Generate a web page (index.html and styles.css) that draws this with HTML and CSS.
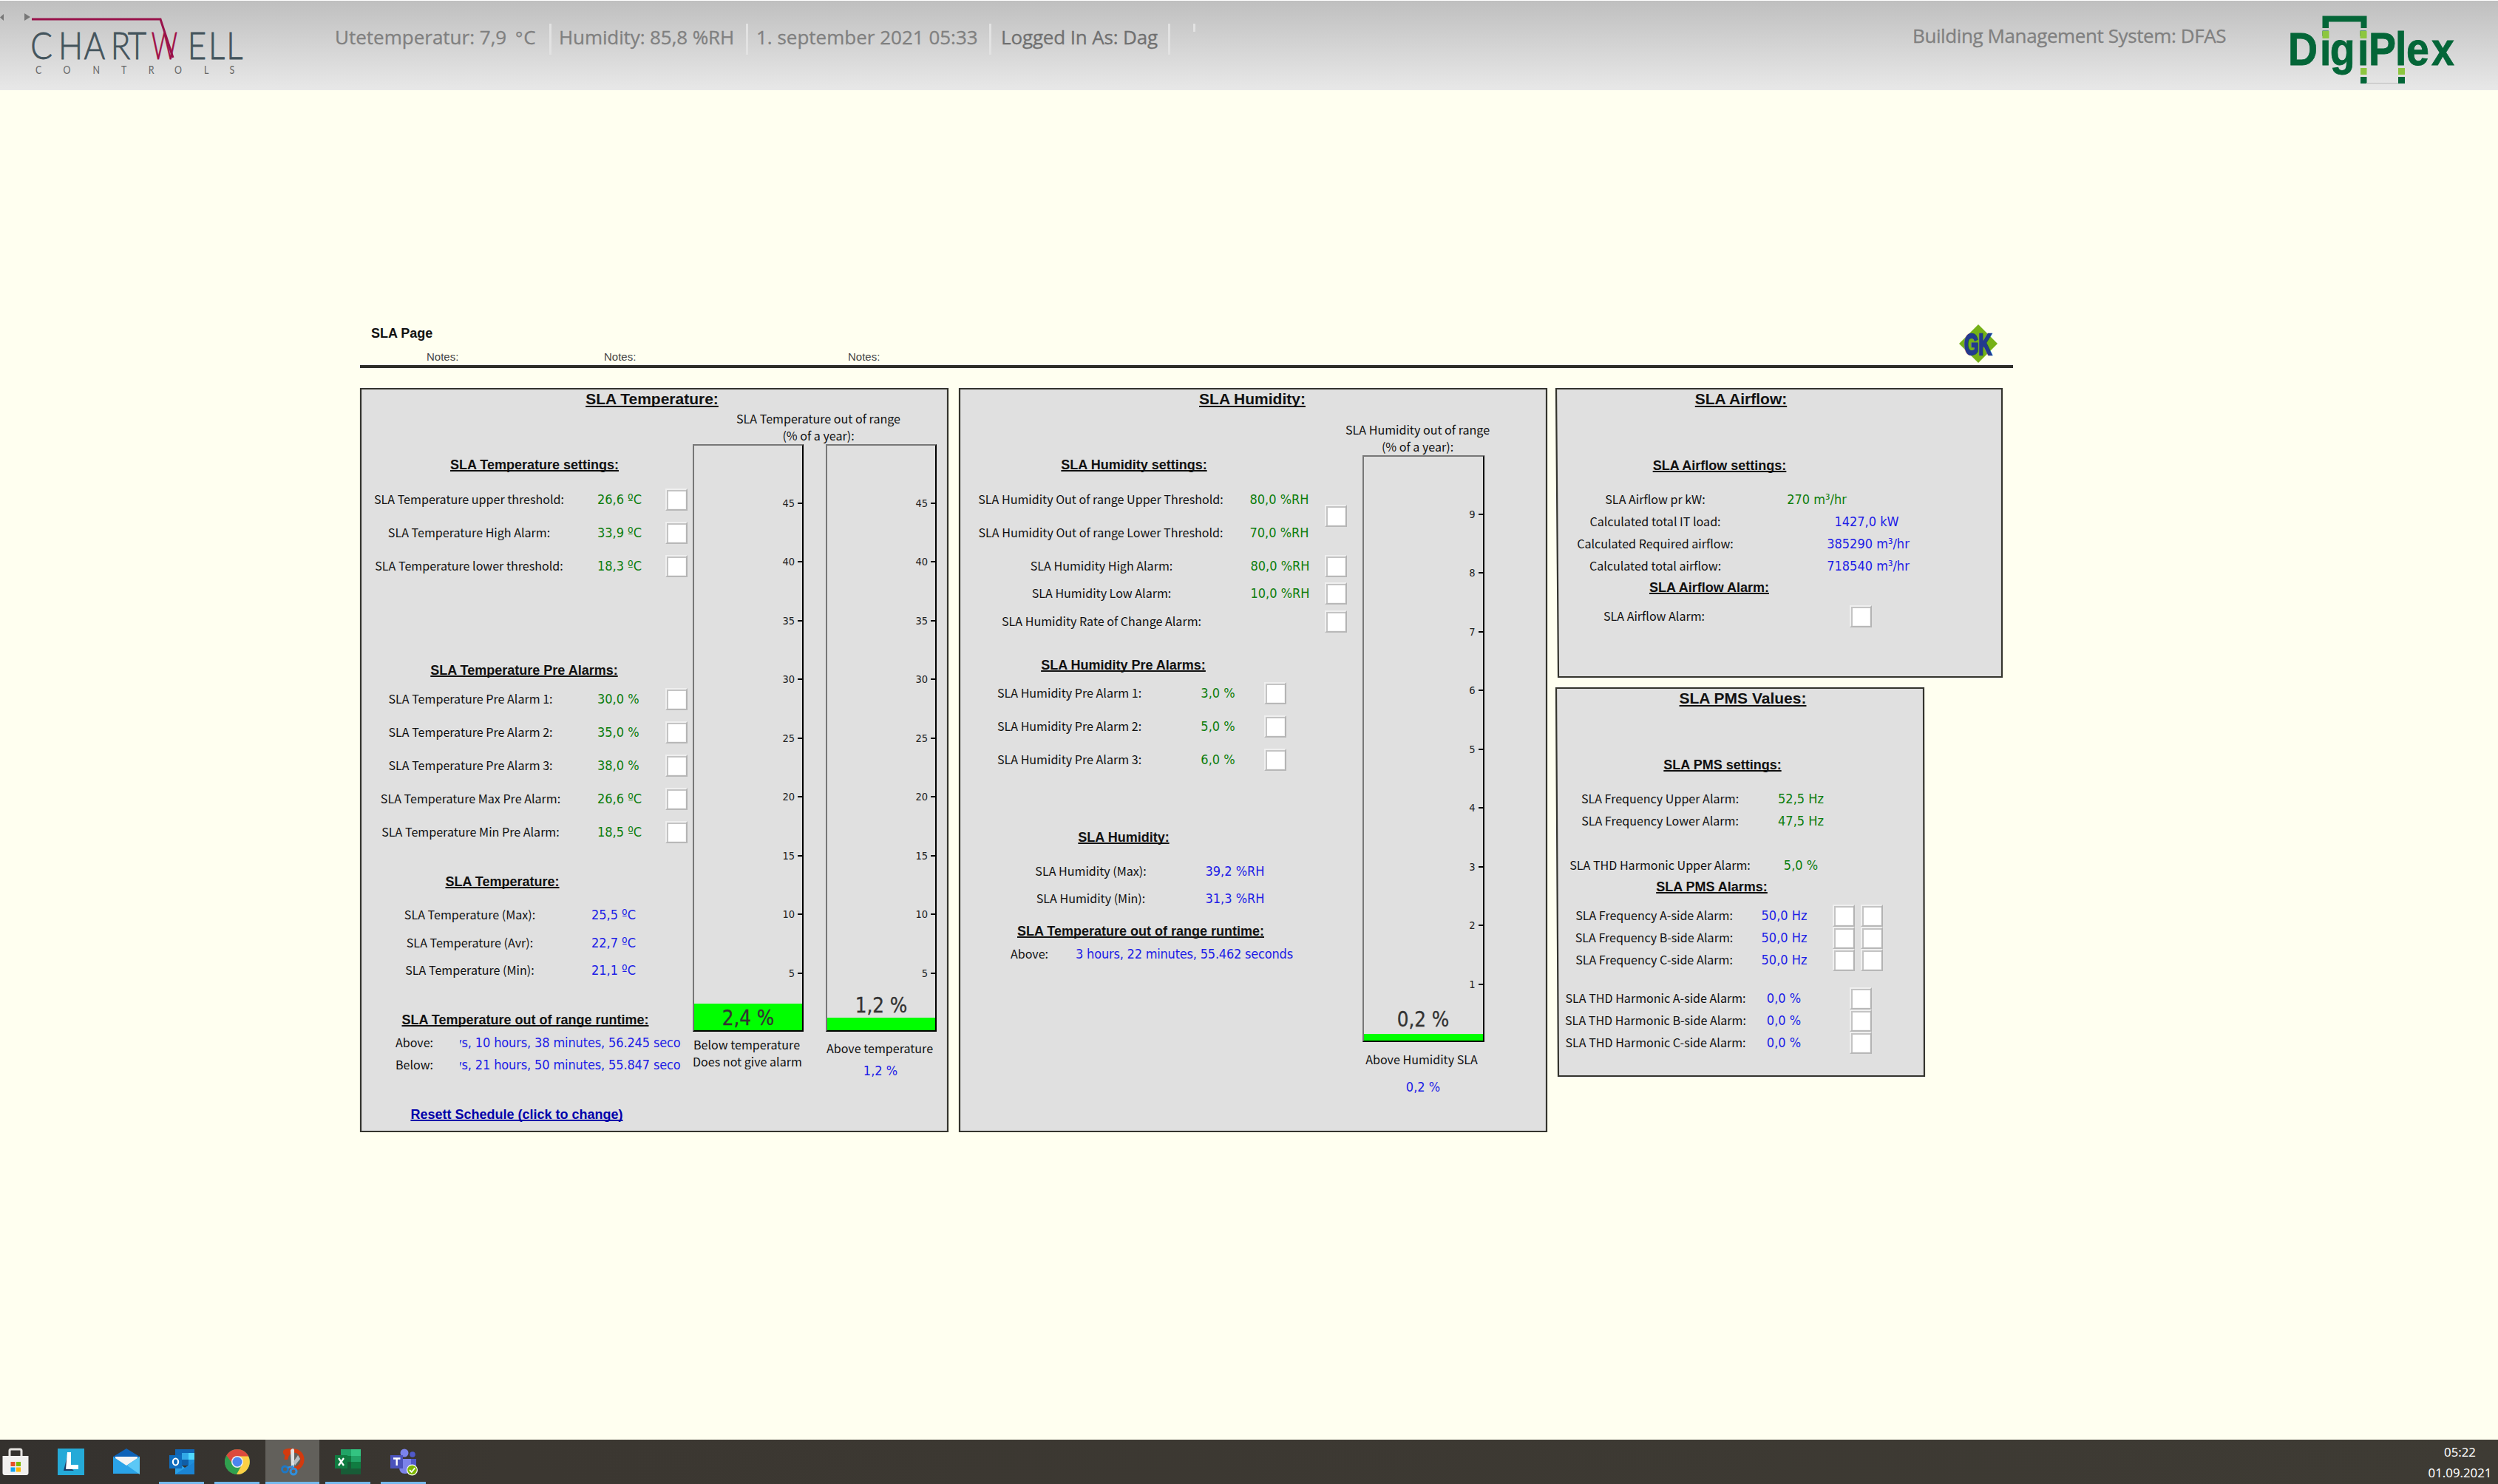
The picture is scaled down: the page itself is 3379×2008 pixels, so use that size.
FILE: index.html
```html
<!DOCTYPE html>
<html lang="en">
<head>
<meta charset="utf-8">
<title>SLA Page</title>
<link rel="stylesheet" href="styles.css">
</head>
<body>
<header class="topbar">
  <svg class="chartwell" viewBox="0 0 340 122" width="340" height="122">
    <path d="M5 19v9L0 23.500z" fill="#777"/>
    <path d="M33 18v10l8-5z" fill="#777"/>
    <g class="cw-name" transform="scale(.86 1)">
      <text y="80" x="48 92 132 174 201">CHART</text>
      <text y="80" x="295 328 356">ELL</text>
    </g>
    <g class="cw-name" transform="scale(.68 1)"><text class="cw-red" y="80" x="301">W</text></g>
    <path d="M43 26H217L234 78" fill="none" stroke="#98124a" stroke-width="3"/>
    <g class="cw-sub" transform="scale(.8 1)"><text y="100" x="60 107 157 205 251 295 345 388">CONTROLS</text></g>
  </svg>
  <div class="status">
    <span class="st s1">Utetemperatur: 7,9 <span class="ring">°</span>C</span>
    <span class="st s2">Humidity: 85,8 %RH</span>
    <span class="st s3">1. september 2021 05:33</span>
    <span class="st s4">Logged In As: Dag</span>
    <span class="stub"></span>
  </div>
  <div class="system">Building Management System: DFAS</div>
  <svg class="digiplex" viewBox="0 0 230 122" width="230" height="122">
    <g transform="scale(.88 1)"><text y="88.500" x="-4.600 44.400 59.900 102.300 119.300 160.300 177.400 216">DigiPlex</text></g>
    <path d="M42.500 38V21.500H102.500V38H94.500V29.500H51V38z" fill="#046638"/>
    <path d="M94 104h8.500v9H94zM145 104h9v9h-9z" fill="#046638"/>
    <path d="M102 112.500h43" stroke="#bbb"/>
    <path d="M42.500 42h9v10h-9zM93.500 42h9v10h-9zM94 92h8.500v9H94zM145 92h9v9h-9z" fill="#8dc63f"/>
  </svg>
</header>

<main class="page">
  <div class="page-head">
    <div class="head-text">
      <h1>SLA Page</h1>
      <div class="notes"><span>Notes:</span><span>Notes:</span><span>Notes:</span></div>
    </div>
    <svg class="gk" viewBox="0 0 52 52" width="52" height="52">
      <path class="gem" d="M26 0L52 26 26 52 0 26z"/>
      <g transform="translate(7 40.500) scale(.62 1)"><text x="0 31">GK</text></g>
    </svg>
  </div>

  <div class="panels">
    <section class="panel temp">
      <svg class="frame" viewBox="0 0 796 1007"><path d="M1 1H795V1006H1z"/></svg>
      <h2>SLA Temperature:</h2>
      <div class="body">
        <div class="left">
          <h3 class="t-set">SLA Temperature settings:</h3>
          <div class="rows g45 c-set">
            <span>SLA Temperature upper threshold:</span><b class="v">26,6 ºC</b><i class="box"></i>
            <span>SLA Temperature High Alarm:</span><b class="v">33,9 ºC</b><i class="box"></i>
            <span>SLA Temperature lower threshold:</span><b class="v">18,3 ºC</b><i class="box"></i>
          </div>
          <h3 class="t-pre">SLA Temperature Pre Alarms:</h3>
          <div class="rows g45 c-pre">
            <span>SLA Temperature Pre Alarm 1:</span><b class="v">30,0 %</b><i class="box"></i>
            <span>SLA Temperature Pre Alarm 2:</span><b class="v">35,0 %</b><i class="box"></i>
            <span>SLA Temperature Pre Alarm 3:</span><b class="v">38,0 %</b><i class="box"></i>
            <span>SLA Temperature Max Pre Alarm:</span><b class="v">26,6 ºC</b><i class="box"></i>
            <span>SLA Temperature Min Pre Alarm:</span><b class="v">18,5 ºC</b><i class="box"></i>
          </div>
          <h3 class="t-cur">SLA Temperature:</h3>
          <div class="rows g37 c-cur">
            <span>SLA Temperature (Max):</span><b class="v live">25,5 ºC</b>
            <span>SLA Temperature (Avr):</span><b class="v live">22,7 ºC</b>
            <span>SLA Temperature (Min):</span><b class="v live">21,1 ºC</b>
          </div>
          <h3 class="t-run">SLA Temperature out of range runtime:</h3>
          <div class="rows c-run">
            <span>Above:</span><b class="v live clip"><em>ys, 10 hours, 38 minutes, 56.245 secon</em></b>
            <span>Below:</span><b class="v live clip"><em>ys, 21 hours, 50 minutes, 55.847 secon</em></b>
          </div>
          <a class="reset">Resett Schedule (click to change)</a>
        </div>
        <div class="right">
          <p class="cap">SLA Temperature out of range<br>(% of a year):</p>
          <div class="gauges">
            <div class="gcol">
              <div class="gauge">
                <div class="fill" style="height:4.6%"></div>
                <div class="scale"><i>45</i><i>40</i><i>35</i><i>30</i><i>25</i><i>20</i><i>15</i><i>10</i><i>5</i></div>
                <div class="gval low">2,4 %</div>
              </div>
              <p class="foot f1">Below temperature<br>Does not give alarm</p>
            </div>
            <div class="gcol">
              <div class="gauge">
                <div class="fill" style="height:2.2%"></div>
                <div class="scale"><i>45</i><i>40</i><i>35</i><i>30</i><i>25</i><i>20</i><i>15</i><i>10</i><i>5</i></div>
                <div class="gval mid">1,2 %</div>
              </div>
              <p class="foot f2">Above temperature</p>
              <b class="v live gnum">1,2 %</b>
            </div>
          </div>
        </div>
      </div>
    </section>

    <section class="panel hum">
      <svg class="frame" viewBox="0 0 796 1007"><path d="M1 1H795V1006H1z"/></svg>
      <h2>SLA Humidity:</h2>
      <div class="body">
        <div class="left">
          <h3 class="t-set">SLA Humidity settings:</h3>
          <div class="rows g45 c-set">
            <span>SLA Humidity Out of range Upper Threshold:</span><b class="v">80,0 %RH</b><i class="box span2"></i>
            <span>SLA Humidity Out of range Lower Threshold:</span><b class="v">70,0 %RH</b>
          </div>
          <div class="rows g37 c-lim">
            <span>SLA Humidity High Alarm:</span><b class="v">80,0 %RH</b><i class="box"></i>
            <span>SLA Humidity Low Alarm:</span><b class="v">10,0 %RH</b><i class="box"></i>
            <span>SLA Humidity Rate of Change Alarm:</span><b class="v"></b><i class="box"></i>
          </div>
          <h3 class="t-pre">SLA Humidity Pre Alarms:</h3>
          <div class="rows g45 c-pre">
            <span>SLA Humidity Pre Alarm 1:</span><b class="v">3,0 %</b><i class="box"></i>
            <span>SLA Humidity Pre Alarm 2:</span><b class="v">5,0 %</b><i class="box"></i>
            <span>SLA Humidity Pre Alarm 3:</span><b class="v">6,0 %</b><i class="box"></i>
          </div>
          <h3 class="t-cur">SLA Humidity:</h3>
          <div class="rows g37 c-cur">
            <span>SLA Humidity (Max):</span><b class="v live">39,2 %RH</b>
            <span>SLA Humidity (Min):</span><b class="v live">31,3 %RH</b>
          </div>
          <h3 class="t-run">SLA Temperature out of range runtime:</h3>
          <div class="rows c-run">
            <span>Above:</span><b class="v live dur">3 hours, 22 minutes, 55.462 seconds</b>
          </div>
        </div>
        <div class="right">
          <p class="cap">SLA Humidity out of range<br>(% of a year):</p>
          <div class="gcol">
            <div class="gauge">
              <div class="fill" style="height:1.2%"></div>
              <div class="scale"><i>9</i><i>8</i><i>7</i><i>6</i><i>5</i><i>4</i><i>3</i><i>2</i><i>1</i></div>
              <div class="gval near">0,2 %</div>
            </div>
            <p class="foot f3">Above Humidity SLA</p>
            <b class="v live gnum">0,2 %</b>
          </div>
        </div>
      </div>
    </section>

    <div class="stack">
      <section class="panel air">
        <svg class="frame" viewBox="0 0 605 392"><path d="M1 1H604V391H4z"/></svg>
        <h2>SLA Airflow:</h2>
        <h3 class="t-set">SLA Airflow settings:</h3>
        <div class="rows c-set">
          <span>SLA Airflow pr kW:</span><b class="v near-label">270 m³/hr</b>
          <span>Calculated total IT load:</span><b class="v live kw">1427,0 kW</b>
          <span>Calculated Required airflow:</span><b class="v live">385290 m³/hr</b>
          <span>Calculated total airflow:</span><b class="v live">718540 m³/hr</b>
        </div>
        <h3 class="t-alarm">SLA Airflow Alarm:</h3>
        <div class="rows c-alarm"><span>SLA Airflow Alarm:</span><i class="box"></i></div>
      </section>

      <section class="panel pms">
        <svg class="frame" viewBox="0 0 500 527"><path d="M1 1H498L499 526H4z"/></svg>
        <h2>SLA PMS Values:</h2>
        <h3 class="t-set">SLA PMS settings:</h3>
        <div class="rows c-set">
          <span>SLA Frequency Upper Alarm:</span><b class="v">52,5 Hz</b>
          <span>SLA Frequency Lower Alarm:</span><b class="v">47,5 Hz</b>
        </div>
        <div class="rows c-set thd-set">
          <span>SLA THD Harmonic Upper Alarm:</span><b class="v">5,0 %</b>
        </div>
        <h3 class="t-alarm">SLA PMS Alarms:</h3>
        <div class="rows c-freq">
          <span>SLA Frequency A-side Alarm:</span><b class="v live">50,0 Hz</b><i class="box"></i><i class="box"></i>
          <span>SLA Frequency B-side Alarm:</span><b class="v live">50,0 Hz</b><i class="box"></i><i class="box"></i>
          <span>SLA Frequency C-side Alarm:</span><b class="v live">50,0 Hz</b><i class="box"></i><i class="box"></i>
        </div>
        <div class="rows c-thd">
          <span>SLA THD Harmonic A-side Alarm:</span><b class="v live">0,0 %</b><i class="box"></i>
          <span>SLA THD Harmonic B-side Alarm:</span><b class="v live">0,0 %</b><i class="box"></i>
          <span>SLA THD Harmonic C-side Alarm:</span><b class="v live">0,0 %</b><i class="box"></i>
        </div>
      </section>
    </div>
  </div>
</main>

<footer class="taskbar">
  <div class="apps">
    <span class="app"><svg viewBox="0 0 36 36" width="36" height="36">
      <path d="M10 12V3q0-2 2-2h12q2 0 2 2v9" fill="none" stroke="#e4e2df" stroke-width="3"/>
      <path d="M.500 10h35v23q0 3-3 3h-29q-3 0-3-3z" fill="#f1f0ef"/>
      <path d="M11.500 18h6v6h-6z" fill="#e8502a"/><path d="M19 18h6v6h-6z" fill="#7fba00"/><path d="M11.500 25.500h6v6h-6z" fill="#12a3ee"/><path d="M19 25.500h6v6h-6z" fill="#ffb700"/></svg></span>
    <span class="app"><svg viewBox="0 0 36 36" width="36" height="36">
      <path d="M0 0h36v36H0z" fill="#25aad8"/><path d="M14 6L8 30h14l-6-5z" fill="#1b3a63"/><path d="M13 5h5v17h10v6H11z" fill="#fff"/></svg></span>
    <span class="app"><svg viewBox="0 0 36 36" width="36" height="36">
      <path d="M0 11L18 0l18 11v4H0z" fill="#0d62b8"/><path d="M3 11h30v6L18 28 3 17z" fill="#f4f4f4"/>
      <path d="M0 11l18 12 18-12v23H0z" fill="#2aa3e8"/><path d="M36 11L19 23 36 35z" fill="#5cc8f6"/><path d="M3 11h30L18 22z" fill="#f4f4f4"/></svg></span>
    <span class="app run"><svg viewBox="0 0 36 36" width="36" height="36">
      <path d="M9 1h26v17H9z" fill="#1066b5"/><path d="M18 6h9v9h-9z" fill="#32a9e7"/><path d="M27 6h8v9h-8z" fill="#50d9ff"/><path d="M18 15h9v8h-9z" fill="#0f5ea8"/><path d="M27 15h8v8h-8z" fill="#1e8fdc"/>
      <path d="M9 17l13 9 13-8v17H9z" fill="#29a0e6"/><path d="M9 35l26-17v17z" fill="#1b84d4"/>
      <path d="M1 9h17v18H1z" fill="#0f6cbd"/><ellipse cx="9.500" cy="18" rx="3.600" ry="4.500" fill="none" stroke="#fff" stroke-width="2.200"/></svg></span>
    <span class="app run"><svg viewBox="0 0 36 36" width="36" height="36">
      <circle cx="18" cy="18" r="17" fill="#4caf50"/><path d="M3.300 9.500A17 17 0 0 1 32.700 9.500L33 11H18a7 7 0 0 0-6 10.500z" fill="#dc4a3d"/>
      <path d="M3.300 9.500A17 17 0 0 0 17 35l7-13.500H12z" fill="#2fa04e"/><path d="M33 10.500A17 17 0 0 1 17 35l7.500-13.500Q27 15 20 10.500z" fill="#fdd046"/>
      <circle cx="18" cy="18" r="8" fill="#eee"/><circle cx="18" cy="18" r="6.500" fill="#4c85ee"/></svg></span>
    <span class="app run active"><svg viewBox="0 0 36 36" width="36" height="36">
      <ellipse cx="20" cy="15" rx="11" ry="12" fill="none" stroke="#d33a0e" stroke-width="5"/><path d="M5 3q4-4 14-3v5L9 10Q4 8 5 3z" fill="#d33a0e"/><path d="M5 15h10v11H5z" fill="#62605b"/>
      <path d="M15 2q4-4 5 0v23h-4z" fill="#dfe2e4"/><path d="M19 18l6-9 3 5-7 9z" fill="#b9bec2"/>
      <circle cx="7.500" cy="28" r="4" fill="none" stroke="#1f78c4" stroke-width="3"/><circle cx="19" cy="31" r="4" fill="none" stroke="#2f8fdc" stroke-width="3"/><path d="M11 26l7-2 1 4" fill="none" stroke="#2f8fdc" stroke-width="2.500"/></svg></span>
    <span class="app run"><svg viewBox="0 0 36 36" width="36" height="36">
      <path d="M8 1h14v9H8z" fill="#21a366"/><path d="M22 1h13v9H22z" fill="#33c481"/><path d="M8 10h14v8H8z" fill="#107c41"/><path d="M22 10h13v8H22z" fill="#21a366"/><path d="M8 18h14v9H8z" fill="#185c37"/><path d="M22 18h13v9H22z" fill="#107c41"/><path d="M8 27h27v8H8z" fill="#185c37"/>
      <path d="M0 9h17v18H0z" fill="#107c41"/><path d="M5 13l7 10M12 13L5 23" stroke="#fff" stroke-width="2.300"/></svg></span>
    <span class="app run"><svg viewBox="0 0 36 36" width="36" height="36">
      <circle cx="19" cy="6" r="5.500" fill="#7b83eb"/><circle cx="30" cy="8" r="3.800" fill="#5059c9"/><path d="M24 14h11v10q0 6-6 6h-5z" fill="#5059c9"/><path d="M12 14h16v11q0 9-8 9t-8-9z" fill="#7b83eb"/>
      <path d="M0 9h17v18H0z" fill="#4b53bc"/><path d="M4 13.500h9.500M8.700 13.500V23" stroke="#fff" stroke-width="2.400"/>
      <circle cx="29.500" cy="29" r="7.500" fill="#fff"/><circle cx="29.500" cy="29" r="6.300" fill="#7db700"/><path d="M26 29l2.800 2.800 4.500-5.500" fill="none" stroke="#fff" stroke-width="1.800"/></svg></span>
  </div>
  <div class="clock">05:22<br>01.09.2021</div>
</footer>
</body>
</html>
```
FILE: styles.css
```css
* { box-sizing: border-box; }
body {
  margin: 0;
  width: 3379px;
  height: 2008px;
  overflow: hidden;
  display: flex;
  flex-direction: column;
  background: #fffff0;
  color: #111;
  font: 16.080px/30px "Noto Sans CJK SC", "Noto Sans", sans-serif;
}
h1, h2, h3, p { margin: 0; }
svg { display: block; overflow: visible; flex: none; }

/* top bar */
.topbar {
  height: 122px;
  display: flex;
  flex: none;
  border-top: 1px solid #fff;
  background: linear-gradient(#bfbfbf, #e8e8e8);
  font: 26px/38px "Open Sans", "Noto Sans", sans-serif;
  color: #808080;
  white-space: nowrap;
}
.chartwell, .digiplex { margin-top: -1px; }
.cw-name { font: 300 51px Lato, sans-serif; fill: #44545c; stroke: #44545c; stroke-width: .8; }
.cw-red { fill: #a00b45; stroke: #a00b45; }
.cw-sub { font: 15.500px Lato, sans-serif; fill: #666; }
.status { display: flex; margin: 31px 0 0 113px; height: 42px; }
.st { border-right: 3px solid #e2e2e2; line-height: 37px; -webkit-text-stroke: .3px; }
.ring { font-size: 24px; padding: 0 1px 0 5px; }
.s1 { width: 293px; }
.s2 { width: 266px; padding-left: 10px; letter-spacing: -.1px; }
.s3 { width: 329px; padding-left: 11px; }
.s4 { width: 242px; padding-left: 13px; color: #707070; letter-spacing: -.15px; }
.stub { width: 3px; height: 11px; margin-left: 31px; background: #e2e2e2; }
.system { width: 512px; margin: 28px 0 0 970px; letter-spacing: -.4px; -webkit-text-stroke: .3px; }
.digiplex { font: bold 63px "Liberation Sans", Arial, sans-serif; fill: #046638; }
.digiplex text { stroke: #046638; stroke-width: .8; }

/* page heading */
.page { flex: 1; padding: 317px 0 0 487px; }
.page-head {
  width: 2236px;
  height: 59px;
  display: flex;
  justify-content: space-between;
  padding-right: 21px;
  border-bottom: 4px solid #2d2d28;
  font-family: "Liberation Sans", Arial, sans-serif;
}
.head-text { padding: 2px 0 0 15px; }
h1 { font-size: 18px; line-height: 20px; }
.notes { display: flex; padding: 11px 0 0 75px; font-size: 15px; line-height: 22px; color: #444; }
.notes span:nth-child(1) { width: 240px; }
.notes span:nth-child(2) { width: 330px; }
.gk { font: bold 40px "Liberation Sans", Arial, sans-serif; fill: #233a8e; stroke: #233a8e; stroke-width: 2.500; }
.gem { fill: #76b117; stroke: none; }

/* panels */
.panels { display: flex; align-items: flex-start; margin-top: 27px; gap: 14px; }
.panel { position: relative; width: 796px; height: 1007px; text-align: center; white-space: nowrap; }
.stack { margin-left: -3px; display: flex; flex-direction: column; gap: 13px; }
.frame { position: absolute; inset: 0; z-index: -1; width: 100%; height: 100%; fill: #e0e0e0; stroke: #34342e; stroke-width: 2.200; }
h2, h3, .reset {
  font-family: "Liberation Sans", Arial, sans-serif;
  font-weight: bold;
  text-decoration: underline;
  text-decoration-thickness: 2px;
  text-underline-offset: 1px;
  text-decoration-skip-ink: none;
}
h2 { font-size: 21px; line-height: 30px; text-underline-offset: 2px; }
h3 { font-size: 18px; line-height: 30px; }
.body { display: flex; }

.rows { display: grid; grid-auto-rows: 30px; justify-items: center; align-items: center; }
.rows span { line-height: 28px; padding: 0 1px 2px 0; }
.g45 { row-gap: 15px; }
.g37 { row-gap: 7.500px; }
.v { font: 18px/30px "DejaVu Sans Condensed", "DejaVu Sans", sans-serif; font-stretch: condensed; color: #0c7d0c; }
.live { color: #1c1ce6; }
.box {
  width: 30px;
  height: 30px;
  justify-self: end;
  background: #fff;
  border: 2px solid;
  border-color: #efefef #b4b4b4 #b8b8b8 #efefef;
  box-shadow: inset 1px 1px 0 1px #c4c4c4, inset -1px -1px 0 #f2f2f2;
}

/* temperature panel */
.temp h2 { width: 790px; }
.temp .left { width: 450px; }
.temp .t-set { width: 472px; margin-top: 59px; }
.temp .c-set { grid-template-columns: 296px 110px 37px; margin-top: 16.500px; }
.temp .t-pre { width: 444px; margin-top: 111.500px; }
.temp .c-pre { grid-template-columns: 300px 106px 37px; margin-top: 8.500px; }
.temp .c-pre .v { justify-self: start; padding-left: 21px; }
.temp .t-cur { width: 385px; margin-top: 37px; }
.temp .c-cur { grid-template-columns: 298px 90px; margin-top: 15.500px; }
.temp .t-run { width: 447px; margin-top: 36.500px; }
.temp .c-run { grid-template-columns: 122px 300px; padding-left: 13px; margin-top: 1px; }
.clip { width: 300px; overflow: hidden; text-align: left; letter-spacing: -.13px; }
.clip em { font-style: normal; display: block; margin-left: -7px; }
.reset { display: block; width: 424px; margin-top: 37px; font-size: 18px; color: #0000aa; }
.temp .right { width: 330px; }

.cap { line-height: 23px; padding-left: 10px; }
.gauges { display: flex; gap: 30px; }
.gcol { width: 150px; }
.gauge {
  position: relative;
  height: 795px;
  border: 2px solid;
  border-color: #777 #000 #000 #777;
}
.fill { position: absolute; left: 0; right: 0; bottom: 0; background: #0f0; }
.scale { position: relative; height: 791px; display: grid; grid-template-rows: repeat(9, 79.500px); }
.scale i {
  display: flex;
  justify-content: flex-end;
  align-items: center;
  align-self: end;
  height: 20px;
  transform: translateY(8px);
  gap: 4px;
  font: 14.500px/20px "DejaVu Sans Condensed", "DejaVu Sans", sans-serif;
  font-stretch: condensed;
  color: #222;
}
.scale i::after { content: ""; width: 6px; height: 2px; background: #000; }
.gval {
  position: absolute;
  left: 0;
  right: 0;
  font: 27.500px/36px "DejaVu Sans Condensed", "DejaVu Sans", sans-serif;
  font-stretch: condensed;
  color: #333;
  -webkit-text-stroke: .3px #333;
}
.low { bottom: -1px; }
.mid { bottom: 16px; }
.near { bottom: 11px; }
.foot { line-height: 23px; padding-right: 4px; }
.f1 { margin-top: 6px; }
.f2 { margin-top: 11px; }
.f3 { margin-top: 12px; }
.gnum { display: block; margin-top: 4px; padding-right: 2px; }

/* humidity panel */
.hum h2 { width: 794px; }
.hum .left { width: 528px; }
.hum .t-set { width: 474px; margin-top: 59px; }
.hum .c-set { grid-template-columns: 385px 97px 43px; margin-top: 16.500px; }
.hum .span2 { grid-area: 1 / 3 / span 2; }
.hum .c-lim { grid-template-columns: 387px 95px 43px; margin-top: 15px; }
.hum .t-pre { width: 445px; margin-top: 29px; }
.hum .c-pre { grid-template-columns: 300px 101px 42px; margin-top: 8px; }
.hum .t-cur { width: 446px; margin-top: 75px; }
.hum .c-cur { grid-template-columns: 250px 139px; padding-left: 54px; margin-top: 16px; }
.hum .t-run { width: 492px; margin-top: 13.500px; }
.hum .c-run { grid-template-columns: 72px 346px; padding-left: 60px; margin-top: 1.500px; }
.dur { letter-spacing: -.2px; }
.hum .right { width: 200px; padding-top: 15px; display: flex; flex-direction: column; align-items: center; }
.hum .cap { padding: 0 15px 0 0; }
.hum .gcol { width: 165px; }
.hum .gauge { height: 794px; }
.hum .gnum { margin-top: 11px; padding-right: 0; }

/* airflow panel */
.air { width: 605px; height: 392px; }
.air h2 { width: 502px; }
.air .t-set { width: 444px; margin-top: 59.500px; }
.air .c-set { grid-template-columns: 271px 304px; margin-top: 16.500px; }
.near-label { padding-right: 139px; }
.kw { padding-right: 4px; }
.air .t-alarm { width: 416px; margin-top: -1.500px; }
.air .c-alarm { grid-template-columns: 268px 160px; margin-top: 9px; }

/* power panel */
.pms { width: 500px; height: 527px; }
.pms h2 { width: 507px; line-height: 29px; }
.pms .t-set { width: 452px; margin-top: 60.500px; }
.pms .c-set { grid-template-columns: 284px 96px; margin-top: 16.500px; }
.pms .thd-set { margin-top: 29.500px; }
.pms .t-alarm { width: 423px; margin-top: -1px; }
.pms .c-freq { grid-template-columns: 268px 83px 54px 37.500px; margin-top: 9px; }
.pms .c-thd { grid-template-columns: 272px 74px 82px; margin-top: 22px; }

/* taskbar */
.taskbar {
  height: 60px;
  flex: none;
  display: flex;
  justify-content: space-between;
  background: linear-gradient(90deg, #34312e, #3b3731 20%, #3e3b34);
}
.apps { display: flex; margin-left: -16px; gap: 2px; }
.app { width: 73px; height: 60px; display: flex; align-items: center; justify-content: center; }
.run { background: linear-gradient(#76b9ed, #76b9ed) bottom / 61px 3px no-repeat; }
.active { background: linear-gradient(#76b9ed, #76b9ed) bottom / 100% 3px no-repeat #62605b; }
.clock {
  width: 103px;
  padding-top: 3px;
  text-align: center;
  font: 16.800px/28px "Noto Sans", sans-serif;
  color: #fff;
}
```
